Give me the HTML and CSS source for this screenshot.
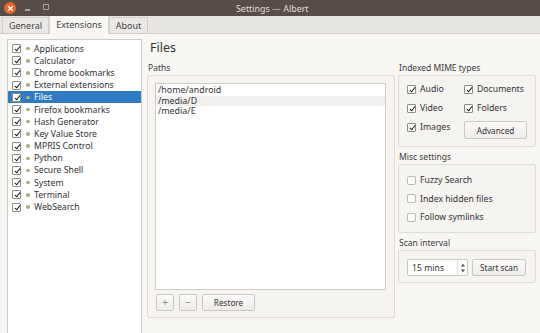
FILE: index.html
```html
<!DOCTYPE html>
<html lang="en">
  <head>
    <meta charset="UTF-8" />
    <title>Settings — Albert</title>
    <link rel="stylesheet" href="styles.css">
  </head>
  <body>
    <div class="window">
      <header class="titlebar">
        <div class="controls">
          <span class="close">
            <svg width="7" height="7" viewBox="0 0 7 7"><path d="M1.2 1.2 L5.8 5.8 M5.8 1.2 L1.2 5.8" stroke="#fff" stroke-width="1.3" /></svg>
          </span>
          <span class="minimize"></span>
          <span class="maximize"></span>
        </div>
        <span class="title">Settings — Albert</span>
      </header>

      <nav class="tabs">
        <span class="tab general">General</span>
        <span class="tab active">Extensions</span>
        <span class="tab about">About</span>
      </nav>

      <main class="pane">
        <ul class="ext-list">
          <li><span class="check on"></span><span class="dot"></span>Applications</li>
          <li><span class="check on"></span><span class="dot"></span>Calculator</li>
          <li><span class="check on"></span><span class="dot"></span>Chrome bookmarks</li>
          <li><span class="check on"></span><span class="dot"></span>External extensions</li>
          <li class="selected"><span class="check on"></span><span class="dot"></span>Files</li>
          <li><span class="check on"></span><span class="dot"></span>Firefox bookmarks</li>
          <li><span class="check on"></span><span class="dot"></span>Hash Generator</li>
          <li><span class="check on"></span><span class="dot"></span>Key Value Store</li>
          <li><span class="check on"></span><span class="dot"></span>MPRIS Control</li>
          <li><span class="check on"></span><span class="dot"></span>Python</li>
          <li><span class="check on"></span><span class="dot"></span>Secure Shell</li>
          <li><span class="check on"></span><span class="dot"></span>System</li>
          <li><span class="check on"></span><span class="dot"></span>Terminal</li>
          <li><span class="check on"></span><span class="dot"></span>WebSearch</li>
        </ul>

        <section class="settings">
          <h1>Files</h1>
          <div class="columns">
            <div class="paths">
              <div class="group-label">Paths</div>
              <div class="group paths-box">
                <ul class="path-list">
                  <li>/home/android</li>
                  <li class="alt">/media/D</li>
                  <li>/media/E</li>
                </ul>
                <div class="path-buttons">
                  <button class="btn small">+</button>
                  <button class="btn small">−</button>
                  <button class="btn restore">Restore</button>
                </div>
              </div>
            </div>

            <div class="side">
              <div class="group-label">Indexed MIME types</div>
              <div class="group mime">
                <label class="opt"><span class="check on"></span>Audio</label>
                <label class="opt"><span class="check on"></span>Documents</label>
                <label class="opt"><span class="check on"></span>Video</label>
                <label class="opt"><span class="check on"></span>Folders</label>
                <label class="opt"><span class="check on"></span>Images</label>
                <button class="btn advanced">Advanced</button>
              </div>

              <div class="group-label">Misc settings</div>
              <div class="group misc">
                <label class="opt"><span class="check"></span>Fuzzy Search</label>
                <label class="opt"><span class="check"></span>Index hidden files</label>
                <label class="opt"><span class="check"></span>Follow symlinks</label>
              </div>

              <div class="group-label">Scan interval</div>
              <div class="group scan">
                <div class="spin">
                  <span>15 mins</span>
                  <span class="arrows">
                    <svg width="6" height="12" viewBox="0 0 6 12"><path d="M0.8 4.5 L3 1.8 L5.2 4.5 Z M0.8 7.5 L3 10.2 L5.2 7.5 Z" fill="#555" /></svg>
                  </span>
                </div>
                <button class="btn scan-btn">Start scan</button>
              </div>
            </div>
          </div>
        </section>
      </main>
    </div>
  </body>
</html>
```

FILE: styles.css
```css
* {
  margin: 0;
  padding: 0;
  box-sizing: border-box;
}

body {
  width: 540px;
  height: 333px;
  overflow: hidden;
  font-family: "Noto Sans", "DejaVu Sans", sans-serif;
  font-size: 8.7px;
  color: #3c3c3c;
  background-color: #f9f7f4;
}

.window {
  display: flex;
  flex-direction: column;
  height: 333px;
}

.titlebar {
  height: 16px;
  flex-shrink: 0;
  background-color: #554e48;
  display: flex;
  align-items: flex-start;
  position: relative;
}

.controls {
  display: flex;
  align-items: flex-start;
  padding: 2px 0 0 4px;
}

.close {
  width: 12px;
  height: 12px;
  border-radius: 50%;
  background-color: #e8652c;
  display: flex;
  align-items: center;
  justify-content: center;
}

.minimize {
  width: 5px;
  height: 1.5px;
  margin: 7px 0 0 9px;
  background-color: #a8a29c;
}

.maximize {
  width: 6px;
  height: 6px;
  border: 1px solid #a8a29c;
  margin: 2px 0 0 13px;
}

.title {
  position: absolute;
  left: 236px;
  top: 2px;
  color: #e0ddd7;
  font-size: 8.9px;
}

.tabs {
  height: 18px;
  flex-shrink: 0;
  background-color: #e9e7e3;
  display: flex;
  align-items: flex-end;
  padding-left: 2px;
  border-bottom: 1px solid #d0cdc8;
}

.tab {
  height: 16px;
  display: flex;
  align-items: center;
  justify-content: center;
  border: 1px solid #d3d0cb;
  border-bottom: none;
  background-color: #ebe9e5;
  color: #444;
  font-size: 9px;
}

.tab.general {
  width: 47px;
}

.tab.active {
  width: 60px;
  height: 19px;
  margin-bottom: -1px;
  background-color: #f9f7f4;
  border-top: none;
  border-color: #d8d5d0;
}

.tab.about {
  width: 39px;
}

.pane {
  flex: 1;
  display: flex;
  padding: 5px 4px 0 7px;
  gap: 5px;
  min-height: 0;
}

.ext-list {
  list-style: none;
  width: 136px;
  background-color: #fff;
  border: 1px solid #cfccc7;
  border-bottom: none;
  padding-top: 2.5px;
}

.ext-list li {
  height: 12.2px;
  display: flex;
  align-items: center;
  color: #333;
}

.ext-list li.selected {
  background-color: #307bc1;
  color: #fff;
}

.ext-list .check {
  margin-left: 4px;
  margin-right: 5px;
}

.dot {
  width: 3.5px;
  height: 3.5px;
  border-radius: 50%;
  background-color: #a3b47e;
  margin-right: 4.5px;
}

.check {
  width: 9px;
  height: 9px;
  border: 1px solid #8e8a86;
  background-color: #fff;
  border-radius: 1px;
  flex-shrink: 0;
  position: relative;
}

.check.on::after {
  content: "";
  position: absolute;
  left: 2.5px;
  top: 0px;
  width: 2px;
  height: 5px;
  border-right: 1.6px solid #111;
  border-bottom: 1.6px solid #111;
  transform: rotate(38deg);
}

.settings {
  flex: 1;
  display: flex;
  flex-direction: column;
}

h1 {
  font-size: 12.5px;
  font-weight: normal;
  color: #333;
  height: 23px;
  padding-left: 3px;
  line-height: 18px;
  flex-shrink: 0;
}

.columns {
  display: flex;
  gap: 3px;
  flex: 1;
}

.group-label {
  height: 13px;
  font-size: 8.5px;
  line-height: 12px;
  padding-left: 1px;
  color: #3a3a3a;
}

.group {
  border: 1px solid #dedbd6;
  border-radius: 2px;
  background-color: #f6f4f1;
}

.paths {
  width: 248px;
  display: flex;
  flex-direction: column;
  padding-bottom: 15px;
}

.paths-box {
  flex: 1;
  display: flex;
  flex-direction: column;
  padding: 7px 8px 6px 7px;
}

.path-list {
  list-style: none;
  flex: 1;
  background-color: #fff;
  border: 1px solid #cfccc7;
  padding-top: 1px;
}

.path-list li {
  height: 10.6px;
  line-height: 10.6px;
  padding-left: 2px;
  font-size: 8.9px;
  color: #333;
}

.path-list li.alt {
  background-color: #f2f0ee;
}

.path-buttons {
  display: flex;
  gap: 5px;
  padding: 4px 0 0 1px;
}

.btn {
  font-family: inherit;
  font-size: 8.2px;
  color: #333;
  border: 1px solid #cbc8c3;
  border-radius: 2px;
  background: linear-gradient(#fbfaf9, #eeece9);
  height: 17px;
}

.btn.small {
  width: 18px;
  color: #8a8a8a;
  font-size: 10px;
  line-height: 13px;
}

.btn.restore {
  width: 53px;
}

.side {
  width: 138px;
  display: flex;
  flex-direction: column;
}

.mime {
  display: grid;
  grid-template-columns: 57px 1fr;
  grid-auto-rows: 12px;
  row-gap: 7px;
  padding: 7px 8px 13px 8px;
  margin-bottom: 4px;
}

.opt {
  display: flex;
  align-items: center;
  gap: 4px;
  height: 12px;
  color: #333;
}

.advanced {
  width: 63px;
  height: 18px;
}

.misc {
  display: flex;
  flex-direction: column;
  gap: 6.5px;
  padding: 9px 8px;
  margin-bottom: 4px;
}

.misc .check {
  border-color: #bcb8b3;
  border-radius: 2px;
}

.scan {
  display: flex;
  gap: 4px;
  padding: 8px 8px 6px 8px;
}

.spin {
  width: 61px;
  height: 17px;
  background-color: #fff;
  border: 1px solid #cbc8c3;
  border-radius: 2px;
  display: flex;
  align-items: center;
  justify-content: space-between;
  padding-left: 4px;
  color: #333;
}

.arrows {
  width: 10px;
  height: 15px;
  border-left: 1px solid #dedbd6;
  display: flex;
  align-items: center;
  justify-content: center;
}

.scan-btn {
  width: 54px;
}
```
